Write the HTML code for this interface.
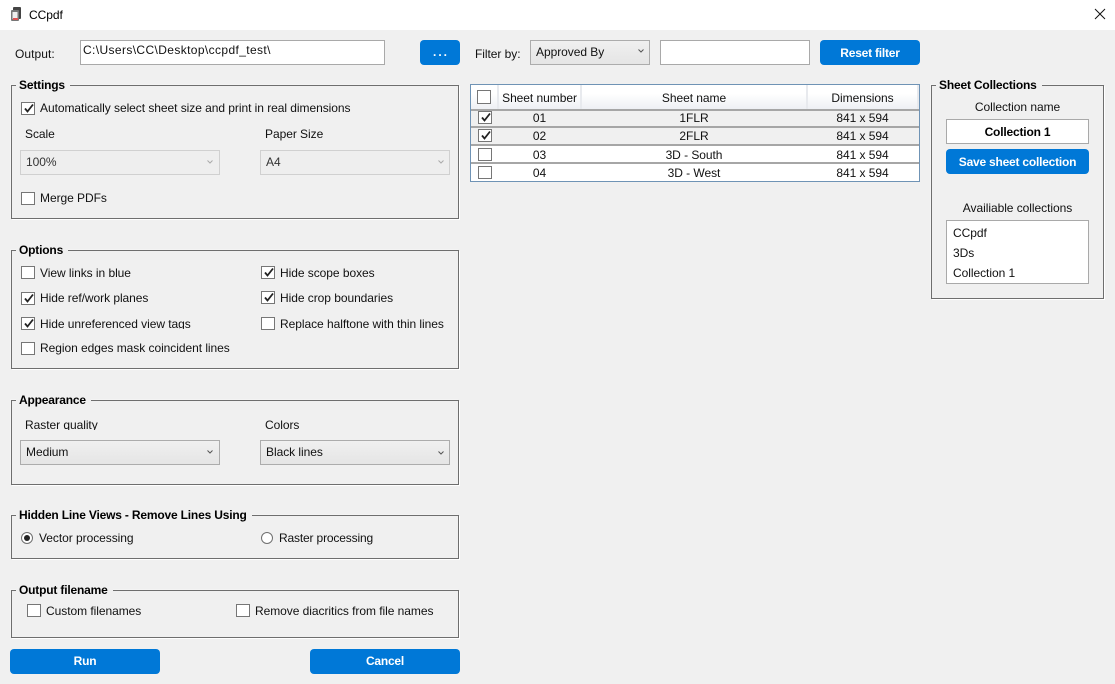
<!DOCTYPE html>
<html><head><meta charset="utf-8"><style>
html,body{margin:0;padding:0}
body{width:1115px;height:684px;overflow:hidden;background:#f0f0f0;position:relative;font:12px/16px "Liberation Sans",sans-serif;color:#111;letter-spacing:-.05px}
div,svg{position:absolute;box-sizing:border-box}
.t{white-space:nowrap}
.c{text-align:center}
.g{border:1px solid #6e6e6e;box-shadow:1px 1px 0 #fff,-1px -1px 0 rgba(255,255,255,.25)}
.l{font-weight:bold;background:#f0f0f0;padding:0 5px 0 3px;white-space:nowrap;color:#000;height:16px;letter-spacing:-.18px}
.b{background:#0078d7;color:#fff;font-weight:bold;text-align:center;border-radius:4px;height:25px;line-height:26px;letter-spacing:-.22px}
.i{background:#fff;border:1px solid #a9a9a9}
.k{width:14px;height:13px;background:#fff;border:1px solid #767676}
.k svg{left:1px;top:0}
.cb{border:1px solid #acacac;background:linear-gradient(#f0f0f0,#e5e5e5)}
.d{border:1px solid #d0d0d0;background:#eee;color:#333}
.sep{background:#a6a6a6;height:2px;left:471px;width:448px}
</style></head><body>
<div style="left:0;top:0;width:1115px;height:30px;background:#fff"></div>
<svg style="left:10px;top:6px" width="13" height="16" viewBox="0 0 13 16"><rect x="3" y="1" width="8" height="12" rx="1" fill="#444"/><rect x="1" y="4" width="8" height="11" rx="1" fill="#777"/><rect x="2.500" y="6" width="5" height="7" fill="#eee"/><rect x="3" y="12" width="5" height="2" fill="#d55"/></svg>
<div class="t" style="left:29px;top:7px;color:#000">CCpdf</div>
<svg style="left:1094px;top:8px" width="12" height="12" viewBox="0 0 12 12"><path d="M1 1L11 11M11 1L1 11" stroke="#111" stroke-width="1" fill="none"/></svg>

<div class="t" style="left:15px;top:46px;letter-spacing:.05px">Output:</div>
<div class="i" style="left:80px;top:40px;width:305px;height:25px"></div>
<div class="t" style="left:83px;top:42px;letter-spacing:.38px">C:\Users\CC\Desktop\ccpdf_test\</div>
<div class="b" style="left:420px;top:40px;width:40px;letter-spacing:2px;padding-left:2px;line-height:24px">...</div>

<div class="t" style="left:475px;top:46px">Filter by:</div>
<div class="cb" style="left:530px;top:40px;width:120px;height:25px"></div>
<div class="t" style="left:536px;top:44px">Approved By</div>
<svg style="left:638px;top:49px" width="6" height="4" viewBox="0 0 6 4"><path d="M.5 .5L3 3L5.500 .5" stroke="#555" fill="none"/></svg>
<div class="i" style="left:660px;top:40px;width:150px;height:25px"></div>
<div class="b" style="left:820px;top:40px;width:100px">Reset filter</div>

<!-- Settings -->
<div class="g" style="left:11px;top:85px;width:448px;height:134px"></div>
<div class="l" style="left:16px;top:77px">Settings</div>
<div class="k" style="left:21px;top:102px"><svg width="12" height="11" viewBox="0 0 12 11"><path d="M2 5.500L4.500 8.500L10 1.500" stroke="#222" stroke-width="1.800" fill="none"/></svg></div>
<div class="t" style="left:40px;top:100px">Automatically select sheet size and print in real dimensions</div>
<div class="t" style="left:25px;top:126px">Scale</div>
<div class="t" style="left:265px;top:126px">Paper Size</div>
<div class="d" style="left:20px;top:150px;width:200px;height:25px"></div>
<div class="t" style="left:26px;top:154px;color:#333">100%</div>
<svg style="left:207px;top:160px" width="6" height="4" viewBox="0 0 6 4"><path d="M.5 .5L3 3L5.500 .5" stroke="#aaa" fill="none"/></svg>
<div class="d" style="left:260px;top:150px;width:190px;height:25px"></div>
<div class="t" style="left:266px;top:154px;color:#333">A4</div>
<svg style="left:438px;top:160px" width="6" height="4" viewBox="0 0 6 4"><path d="M.5 .5L3 3L5.500 .5" stroke="#aaa" fill="none"/></svg>
<div class="k" style="left:21px;top:192px"></div>
<div class="t" style="left:40px;top:190px">Merge PDFs</div>

<!-- Options -->
<div class="g" style="left:11px;top:250px;width:448px;height:119px"></div>
<div class="l" style="left:16px;top:242px">Options</div>
<div class="k" style="left:21px;top:266px"></div>
<div class="t" style="left:40px;top:265px">View links in blue</div>
<div class="k" style="left:21px;top:292px"><svg width="12" height="11" viewBox="0 0 12 11"><path d="M2 5.500L4.500 8.500L10 1.500" stroke="#222" stroke-width="1.800" fill="none"/></svg></div>
<div class="t" style="left:40px;top:290px">Hide ref/work planes</div>
<div class="k" style="left:21px;top:317px"><svg width="12" height="11" viewBox="0 0 12 11"><path d="M2 5.500L4.500 8.500L10 1.500" stroke="#222" stroke-width="1.800" fill="none"/></svg></div>
<div class="t" style="left:40px;top:316px;height:13px;overflow:hidden">Hide unreferenced view tags</div>
<div class="k" style="left:21px;top:342px"></div>
<div class="t" style="left:40px;top:340px">Region edges mask coincident lines</div>
<div class="k" style="left:261px;top:266px"><svg width="12" height="11" viewBox="0 0 12 11"><path d="M2 5.500L4.500 8.500L10 1.500" stroke="#222" stroke-width="1.800" fill="none"/></svg></div>
<div class="t" style="left:280px;top:265px">Hide scope boxes</div>
<div class="k" style="left:261px;top:291px"><svg width="12" height="11" viewBox="0 0 12 11"><path d="M2 5.500L4.500 8.500L10 1.500" stroke="#222" stroke-width="1.800" fill="none"/></svg></div>
<div class="t" style="left:280px;top:290px">Hide crop boundaries</div>
<div class="k" style="left:261px;top:317px"></div>
<div class="t" style="left:280px;top:316px">Replace halftone with thin lines</div>

<!-- Appearance -->
<div class="g" style="left:11px;top:400px;width:448px;height:85px"></div>
<div class="l" style="left:16px;top:392px">Appearance</div>
<div class="t" style="left:25px;top:417px;height:13px;overflow:hidden">Raster quality</div>
<div class="t" style="left:265px;top:417px">Colors</div>
<div class="cb" style="left:20px;top:440px;width:200px;height:25px"></div>
<div class="t" style="left:26px;top:444px">Medium</div>
<svg style="left:207px;top:450px" width="6" height="4" viewBox="0 0 6 4"><path d="M.5 .5L3 3L5.500 .5" stroke="#555" fill="none"/></svg>
<div class="cb" style="left:260px;top:440px;width:190px;height:25px"></div>
<div class="t" style="left:266px;top:444px">Black lines</div>
<svg style="left:438px;top:451px" width="6" height="4" viewBox="0 0 6 4"><path d="M.5 .5L3 3L5.500 .5" stroke="#555" fill="none"/></svg>

<!-- Hidden line -->
<div class="g" style="left:11px;top:515px;width:448px;height:44px"></div>
<div class="l" style="left:16px;top:507px">Hidden Line Views - Remove Lines Using</div>
<svg style="left:20px;top:531px" width="14" height="14" viewBox="0 0 14 14"><circle cx="7" cy="7" r="5.500" fill="#fff" stroke="#707070"/><circle cx="7" cy="7" r="3" fill="#222"/></svg>
<div class="t" style="left:39px;top:530px">Vector processing</div>
<svg style="left:260px;top:531px" width="14" height="14" viewBox="0 0 14 14"><circle cx="7" cy="7" r="5.500" fill="#fff" stroke="#707070"/></svg>
<div class="t" style="left:279px;top:530px;letter-spacing:-.16px">Raster processing</div>

<!-- Output filename -->
<div class="g" style="left:11px;top:590px;width:448px;height:48px"></div>
<div class="l" style="left:16px;top:582px">Output filename</div>
<div class="k" style="left:27px;top:604px"></div>
<div class="t" style="left:46px;top:603px">Custom filenames</div>
<div class="k" style="left:236px;top:604px"></div>
<div class="t" style="left:255px;top:603px">Remove diacritics from file names</div>

<div class="b" style="left:10px;top:649px;width:150px;line-height:25px">Run</div>
<div class="b" style="left:310px;top:649px;width:150px;line-height:25px">Cancel</div>

<!-- Table -->
<div style="left:470px;top:84px;width:450px;height:98px;background:#fff;border:1px solid #6f93b5"></div>
<div style="left:471px;top:85px;width:448px;height:24px;background:linear-gradient(#fff 35%,#eef0f4)"></div>
<div style="left:497px;top:85px;width:2px;height:24px;background:#e8eaee"></div>
<div style="left:580px;top:85px;width:2px;height:24px;background:#e8eaee"></div>
<div style="left:806px;top:85px;width:2px;height:24px;background:#e8eaee"></div>
<div style="left:917px;top:85px;width:2px;height:24px;background:#e8eaee"></div>
<div style="left:471px;top:109px;width:448px;height:36px;background:#f0f0f0"></div>
<div class="sep" style="top:109px"></div>
<div class="sep" style="top:126px"></div>
<div class="sep" style="top:144px"></div>
<div class="sep" style="top:162px"></div>
<div class="k" style="left:477px;top:90px;height:14px"></div>
<div class="t c" style="left:499px;top:90px;width:81px">Sheet number</div>
<div class="t c" style="left:582px;top:90px;width:224px">Sheet name</div>
<div class="t c" style="left:808px;top:90px;width:109px">Dimensions</div>

<div class="k" style="left:478px;top:111px"><svg width="12" height="11" viewBox="0 0 12 11"><path d="M2 5.500L4.500 8.500L10 1.500" stroke="#222" stroke-width="1.800" fill="none"/></svg></div>
<div class="t c" style="left:499px;top:110px;width:81px">01</div>
<div class="t c" style="left:582px;top:110px;width:224px">1FLR</div>
<div class="t c" style="left:808px;top:110px;width:109px">841 x 594</div>
<div class="k" style="left:478px;top:129px"><svg width="12" height="11" viewBox="0 0 12 11"><path d="M2 5.500L4.500 8.500L10 1.500" stroke="#222" stroke-width="1.800" fill="none"/></svg></div>
<div class="t c" style="left:499px;top:128px;width:81px">02</div>
<div class="t c" style="left:582px;top:128px;width:224px">2FLR</div>
<div class="t c" style="left:808px;top:128px;width:109px">841 x 594</div>
<div class="k" style="left:478px;top:148px"></div>
<div class="t c" style="left:499px;top:147px;width:81px">03</div>
<div class="t c" style="left:582px;top:147px;width:224px">3D - South</div>
<div class="t c" style="left:808px;top:147px;width:109px">841 x 594</div>
<div class="k" style="left:478px;top:166px"></div>
<div class="t c" style="left:499px;top:165px;width:81px">04</div>
<div class="t c" style="left:582px;top:165px;width:224px">3D - West</div>
<div class="t c" style="left:808px;top:165px;width:109px">841 x 594</div>

<!-- Sheet Collections -->
<div class="g" style="left:931px;top:85px;width:173px;height:214px"></div>
<div class="l" style="left:936px;top:77px">Sheet Collections</div>
<div class="t c" style="left:946px;top:99px;width:143px">Collection name</div>
<div class="i" style="left:946px;top:119px;width:143px;height:25px"></div>
<div class="t c" style="left:946px;top:124px;width:143px;font-weight:bold;color:#000;letter-spacing:-.18px">Collection 1</div>
<div class="b" style="left:946px;top:149px;width:143px">Save sheet collection</div>
<div class="t c" style="left:946px;top:200px;width:143px">Availiable collections</div>
<div class="i" style="left:946px;top:220px;width:143px;height:64px"></div>
<div class="t" style="left:953px;top:225px">CCpdf</div>
<div class="t" style="left:953px;top:245px">3Ds</div>
<div class="t" style="left:953px;top:265px">Collection 1</div>
</body></html>
